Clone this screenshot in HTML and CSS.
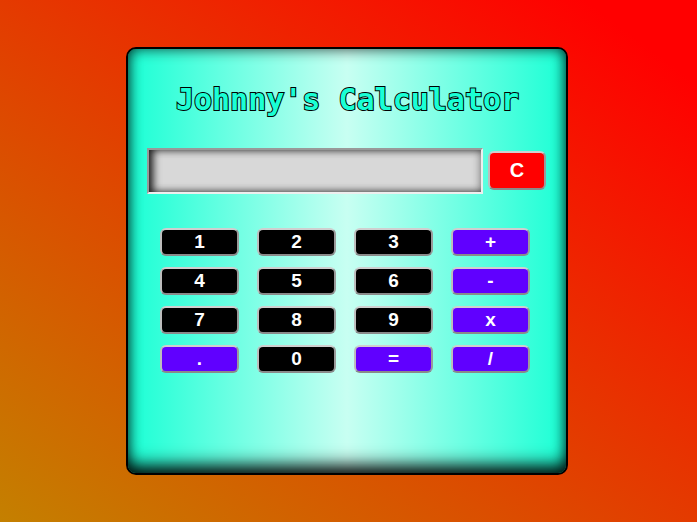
FILE: index.html
```html
<!DOCTYPE html>
<html>
<head>
<meta charset="utf-8">
<link rel="stylesheet" href="styles.css">
</head>
<body>
<div class="page">
  <div class="calc">
    <h1 class="title">Johnny's Calculator</h1>
    <div class="display-row">
      <div class="display"></div>
      <button class="btn clear">C</button>
    </div>
    <div class="keys">
      <button class="btn num">1</button>
      <button class="btn num">2</button>
      <button class="btn num">3</button>
      <button class="btn op">+</button>
      <button class="btn num">4</button>
      <button class="btn num">5</button>
      <button class="btn num">6</button>
      <button class="btn op">-</button>
      <button class="btn num">7</button>
      <button class="btn num">8</button>
      <button class="btn num">9</button>
      <button class="btn op">x</button>
      <button class="btn op">.</button>
      <button class="btn num">0</button>
      <button class="btn op">=</button>
      <button class="btn op">/</button>
    </div>
  </div>
</div>
</body>
</html>
```
FILE: styles.css
```css
html, body {
  margin: 0;
  padding: 0;
  width: 697px;
  height: 522px;
  overflow: hidden;
}
body {
  background: linear-gradient(to top right, #c48000, #ff0000 92%);
  font-family: "Liberation Sans", Arial, sans-serif;
}
.page {
  height: 522px;
  display: flex;
  align-items: center;
  justify-content: center;
}
.calc {
  box-sizing: border-box;
  width: 442px;
  height: 428px;
  margin-left: -3px;
  margin-top: -1px;
  border: 2px solid #000;
  border-radius: 10px;
  background: linear-gradient(to right, #1affd5 0%, #c8fff2 50%, #1affd5 100%);
  box-shadow: inset 0 -14px 18px -6px rgba(0,0,0,0.85), inset 0 0 14px rgba(0,0,0,0.75);
  padding: 33px 20px 0 19px;
}
.title {
  margin: 0;
  text-align: center;
  font-family: "DejaVu Sans Mono", monospace;
  font-weight: bold;
  font-size: 30px;
  line-height: 36px;
  color: #1affd5;
  -webkit-text-stroke: 2px #000;
  paint-order: stroke fill;
  padding-left: 2px;
}
.display-row {
  display: flex;
  align-items: center;
  gap: 5px;
  margin-top: 30px;
}
.display {
  box-sizing: border-box;
  width: 336px;
  height: 46px;
  border: 2px solid;
  border-color: #999 #eee #eee #999;
  background: #d8d8d8;
  box-shadow: inset 6px 0 8px -2px rgba(0,0,0,0.8), inset 0 0 8px rgba(0,0,0,0.5);
}
.btn {
  box-sizing: border-box;
  border: 2px solid;
  border-color: #cfcfcf #9a9a9a #8a8a8a #bdbdbd;
  border-radius: 6px;
  color: #fff;
  font-family: "Liberation Sans", Arial, sans-serif;
  font-weight: bold;
  font-size: 19px;
  padding: 0;
  margin: 0;
  display: flex;
  align-items: center;
  justify-content: center;
}
.clear {
  width: 58px;
  height: 39px;
  background: #ff0000;
  font-size: 20px;
}
.keys {
  display: grid;
  grid-template-columns: repeat(4, 79px);
  grid-auto-rows: 28px;
  column-gap: 18px;
  row-gap: 11px;
  margin-top: 34px;
  margin-left: 13px;
}
.num {
  background: #000;
}
.op {
  background: #6000ff;
}
```
